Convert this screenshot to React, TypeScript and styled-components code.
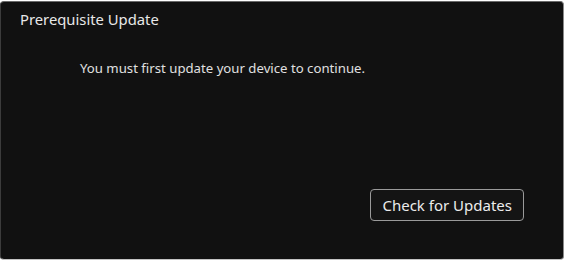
import React from "react";
import styled, { createGlobalStyle } from "styled-components";

const Global = createGlobalStyle`
  html, body { margin: 0; padding: 0; background: #ffffff; }
  body { font-family: "Noto Sans", "Open Sans", sans-serif; }
`;

const Window = styled.div`
  box-sizing: border-box;
  margin-top: 1px;
  width: 564px;
  height: 259px;
  background: #111111;
  border: 1px solid #6a6a6a;
  border-left-color: #3c3c3c;
  border-right-color: #8a8a8a;
  border-bottom-color: #c4c4c4;
  border-radius: 4px;
  display: flex;
  flex-direction: column;
`;

const Title = styled.div`
  padding: 7px 0 0 19px;
  font-size: 14.8px;
  line-height: 20px;
  color: #e8e8e8;
`;

const Body = styled.div`
  flex: 1;
  display: flex;
  flex-direction: column;
  padding: 30px 39px 38px 79px;
`;

const Message = styled.p`
  margin: 0;
  font-size: 13.2px;
  line-height: 18px;
  color: #e0e0e0;
`;

const Footer = styled.div`
  margin-top: auto;
  display: flex;
  justify-content: flex-end;
`;

const Button = styled.button`
  box-sizing: border-box;
  height: 32px;
  padding: 0 11px;
  background: #141414;
  border: 1px solid #9a9a9a;
  border-radius: 4px;
  color: #ececec;
  font-family: "Noto Sans", "Open Sans", sans-serif;
  font-size: 15px;
  line-height: 20px;
`;

export default function App() {
  return (
    <>
      <Global />
      <Window>
        <Title>Prerequisite Update</Title>
        <Body>
          <Message>You must first update your device to continue.</Message>
          <Footer>
            <Button>Check for Updates</Button>
          </Footer>
        </Body>
      </Window>
    </>
  );
}
